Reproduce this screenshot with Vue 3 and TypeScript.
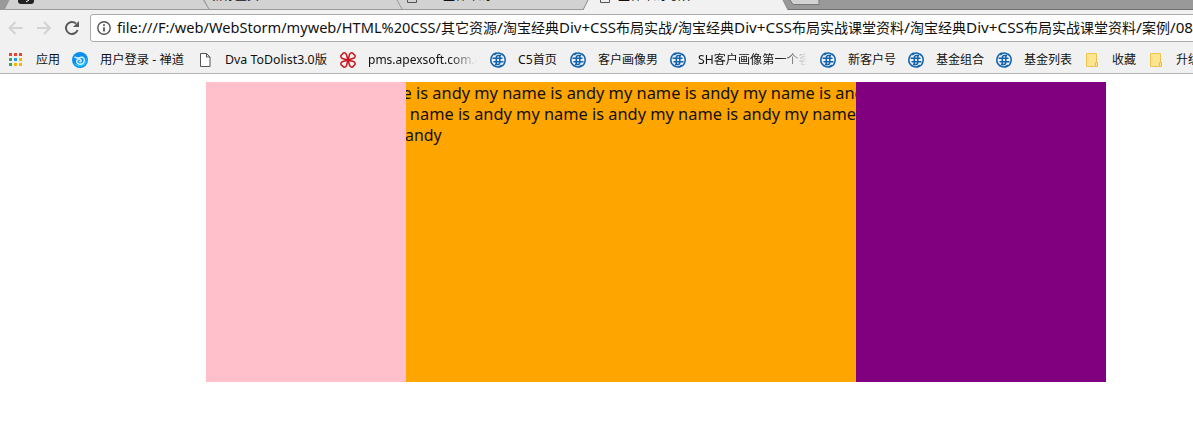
<script setup lang="ts">
interface Segment { text: string; width: number }
interface Bookmark { label: string; icon: 'zen' | 'page' | 'knot' | 'globe' | 'folder'; left: number; text: number; width: number; fade?: boolean }

const address: Segment[] = [
  { text: 'file:///F:/web/WebStorm/myweb/HTML%20CSS/', width: 324 },
  { text: '其它资源', width: 56 },
  { text: '/', width: 6 },
  { text: '淘宝经典', width: 56 },
  { text: 'Div+CSS', width: 57 },
  { text: '布局实战', width: 56 },
  { text: '/', width: 6 },
  { text: '淘宝经典', width: 56 },
  { text: 'Div+CSS', width: 58 },
  { text: '布局实战课堂资料', width: 112 },
  { text: '/', width: 6 },
  { text: '淘宝经典', width: 56 },
  { text: 'Div+CSS', width: 58 },
  { text: '布局实战课堂资料', width: 112 },
  { text: '/', width: 6 },
  { text: '案例', width: 28 },
  { text: '/08', width: 23 },
]
const bookmarks: Bookmark[] = [
  { label: '用户登录 - 禅道', icon: 'zen', left: 72, text: 100, width: 84 },
  { label: 'Dva ToDolist3.0版', icon: 'page', left: 197, text: 225, width: 102 },
  { label: 'pms.apexsoft.com.cn', icon: 'knot', left: 340, text: 368, width: 109, fade: true },
  { label: 'C5首页', icon: 'globe', left: 490, text: 518, width: 39 },
  { label: '客户画像男', icon: 'globe', left: 570, text: 598, width: 60 },
  { label: 'SH客户画像第一个客户', icon: 'globe', left: 670, text: 698, width: 109, fade: true },
  { label: '新客户号', icon: 'globe', left: 820, text: 848, width: 48 },
  { label: '基金组合', icon: 'globe', left: 908, text: 936, width: 48 },
  { label: '基金列表', icon: 'globe', left: 996, text: 1024, width: 48 },
  { label: '收藏', icon: 'folder', left: 1084, text: 1112, width: 24 },
  { label: '升级', icon: 'folder', left: 1148, text: 1176, width: 24 },
]
const gapBefore = (i: number) => bookmarks[i].left - (i ? bookmarks[i - 1].text + bookmarks[i - 1].width : 60)
const natural: Record<string, number> = { 'pms.apexsoft.com.cn': 120, 'SH客户画像第一个客户': 125 }
const labelLength = (b: Bookmark) => natural[b.label] ?? b.width
const sentence = 'my name is andy '
const dots = ['#ea4335', '#ea4335', '#ea4335', '#34a853', '#2196f3', '#fbb400', '#34a853', '#fbb400', '#fbb400']
</script>

<template>
  <div class="window">
    <svg class="tabs" width="1193" height="10" viewBox="0 0 1193 10">
      <rect width="1193" height="10" fill="#999" />
      <path d="M4 10L9 0H203L209 10Z" fill="#d2d2d2" />
      <path d="M209 10L204 0H398L402 10Z" fill="#d2d2d2" />
      <path d="M402 10L397 0H589L583 10Z" fill="#d2d2d2" />
      <path d="M0 9.5H1193" stroke="#999" />
      <path d="M788 9.5H1193" stroke="#6f6f6f" />
      <path d="M4 10L9 0M204 0L209 9M397 0L402 9" fill="none" stroke="#999" />
      <path d="M583 10L588 0H783L788 10Z" fill="#f1f1f1" />
      <path d="M583 10L588 0M783 0L788 10" stroke="#888" />
      <path d="M790 0L793 4.5H819V0" fill="#d2d2d2" stroke="#777" />
      <path d="M18 0H34V1Q34 4 31 4H21Q18 4 18 1Z" fill="#222" />
      <path d="M26 2L29 0" stroke="#fff" />
      <path d="M407.5 0V2.5H416.5V0M600.5 0V2.5H609.5V0" fill="none" stroke="#555" />
      <text x="211" y="0" font-size="12">新标签页</text>
      <text x="443" y="0" font-size="12">圣杯布局</text>
      <text x="618" y="0" font-size="12">圣杯布局与双</text>
    </svg>

    <div class="toolbar">
      <svg class="nav" width="90" height="32" viewBox="0 0 90 32">
        <path d="M22.5 18H10M15.5 12L9.5 18L15.5 24M37 18H50M44 12L50 18L44 24" fill="none" stroke="#d3d3d3" stroke-width="2" />
        <path d="M77.6 20A6 6 0 1 1 76 13.5" fill="none" stroke="#5a5a5a" stroke-width="2" />
        <path d="M79 11V17H73Z" fill="#5a5a5a" />
      </svg>
      <div class="address">
        <svg class="info" width="14" height="14" viewBox="0 0 14 14">
          <circle cx="7" cy="7" r="6.2" fill="none" stroke="#555" stroke-width="1.4" />
          <path d="M7 6.2V10.5M7 3.3V5" stroke="#444" stroke-width="1.6" />
        </svg>
        <svg class="url" width="1080" height="26" viewBox="0 0 1080 26">
          <text v-for="(s, i) in address" :key="i" :x="address.slice(0, i).reduce((n, a) => n + a.width, 0)" y="18" font-size="14" :textLength="s.width" lengthAdjust="spacingAndGlyphs">{{ s.text }}</text>
        </svg>
      </div>
    </div>

    <div class="bookmarks">
      <svg class="apps" width="14" height="14" viewBox="0 0 14 14">
        <rect v-for="(c, i) in dots" :key="i" :x="(i % 3) * 5" :y="Math.floor(i / 3) * 5" width="3" height="3" :fill="c" />
      </svg>
      <svg class="label" width="24" height="20"><text x="0" y="13.5" textLength="24">应用</text></svg>
      <template v-for="(b, i) in bookmarks" :key="b.left">
        <svg class="icon" :style="{ marginLeft: gapBefore(i) + 'px' }" width="16" height="16" viewBox="0 0 16 16">
          <g v-if="b.icon === 'zen'">
            <circle cx="8" cy="8" r="8" fill="#0a8ff0" />
            <path d="M1.5 11Q6 17 12.5 13Q15.5 10 14.5 5Q14 11 9 12.5Q5 13.5 1.5 11Z" fill="#22cdfb" />
            <path d="M2.5 4.8Q5.5 6.8 9.5 5.2Q12.6 5.4 12.3 8.6Q11.5 12.3 8 12.2Q4.4 11.8 4.8 8.8Q5.8 6.2 8.5 7.4Q10.2 9 8.3 9.8Q7 9.8 7.4 8.8" fill="none" stroke="#def7ff" stroke-width="1.4" />
          </g>
          <path v-else-if="b.icon === 'page'" d="M3.5 1.5H9.5L13 5V14.5H3.5ZM9.5 1.5V5H13" fill="#fff" stroke="#555" />
          <g v-else-if="b.icon === 'knot'" fill="none" stroke="#c9151e" stroke-width="1.5" stroke-linejoin="round">
            <path v-for="a in 4" :key="a" :transform="`rotate(${a * 90} 8 8)`" d="M8 8Q4.6 7 2.2 6.4Q.4 5.2 1 3.6L3.4 1Q5.2 .4 6.3 2.3Q7 4.6 8 8Z" />
            <circle cx="8" cy="8" r="1.6" fill="#c9151e" stroke="none" />
          </g>
          <g v-else-if="b.icon === 'globe'" fill="none" stroke="#1263af" stroke-width="1.5">
            <path d="M6.4 1A7.2 7.2 0 0 0 4.2 14.1M9.6 15A7.2 7.2 0 0 0 11.8 1.9M4.2 2.9Q8-.8 12.6 2.8M11.8 13.1Q8 16.8 3.4 13.2" />
            <path d="M2.5 6.3H12.5M3.5 9.8H13.5M6.3 13V5.5Q6.4 3.4 8.6 3.4H11M9.8 3V10.5Q9.7 12.6 7.5 12.6H5" />
          </g>
          <g v-else>
            <path d="M2.5 1.5H12.5V14.5H2.5Z" fill="#ffe48f" stroke="#edc451" />
            <path d="M11.5 10.5H13.5V14.5H11.5Z" fill="#ffe48f" stroke="#e8be45" />
          </g>
        </svg>
        <svg class="label" :class="{ fade: b.fade }" :style="{ marginLeft: b.text - b.left - 16 + 'px' }" :width="b.width" height="20">
          <text x="0" y="13.5" :textLength="labelLength(b)" lengthAdjust="spacingAndGlyphs">{{ b.label }}</text>
        </svg>
      </template>
    </div>

    <main class="layout">
      <div class="left"></div>
      <div class="center">
        <svg width="450" height="70" viewBox="0 0 450 70">
          <text x="-66" y="17" textLength="533" lengthAdjust="spacingAndGlyphs">{{ sentence.repeat(4).trim() }}</text>
          <text x="-24" y="38" textLength="474" lengthAdjust="spacingAndGlyphs">{{ sentence.repeat(3) + 'my name' }}</text>
          <text x="-1" y="59" textLength="36.5" lengthAdjust="spacingAndGlyphs">andy</text>
        </svg>
      </div>
      <div class="right"></div>
    </main>
  </div>
</template>

<style>
body { margin: 0; background: #fff; overflow: hidden; }
</style>
<style scoped>
.window { width: 1193px; height: 443px; overflow: hidden; background: #fff; font-family: "Noto Sans", "Noto Sans CJK SC", sans-serif; color: #111; }
svg { display: block; flex-shrink: 0; }
text { white-space: pre; fill: #111; }
.toolbar { height: 36px; display: flex; background: #f1f1f1; }
.address { width: 1120px; height: 26px; margin-top: 4px; flex-shrink: 0; display: flex; align-items: center; background: #fff; border: 1px solid #aaa; border-radius: 3px; }
.info { margin-left: 6px; }
.url { margin-left: 6px; overflow: hidden; }
.bookmarks { height: 27px; display: flex; align-items: center; background: #f1f1f1; border-bottom: 1px solid #b4b4b4; overflow: hidden; }
.apps { margin-left: 9px; }
.label { margin-left: 13px; font-size: 12px; overflow: hidden; }
.fade { mask-image: linear-gradient(to right, #000 75%, transparent); }
.layout { width: 900px; height: 300px; margin: 8px 0 0 206px; display: flex; }
.left { width: 200px; background: pink; }
.center { width: 450px; background: orange; overflow: hidden; font-size: 16px; }
.right { width: 250px; background: purple; }
</style>
